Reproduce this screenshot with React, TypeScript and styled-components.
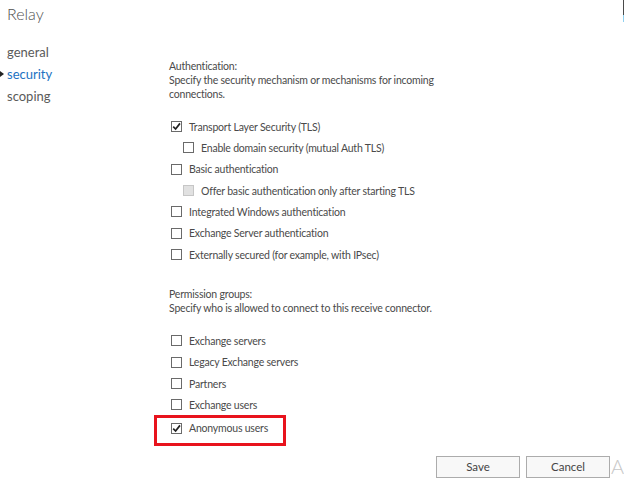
import React from "react";
import styled, { createGlobalStyle } from "styled-components";

const Global = createGlobalStyle`
  html, body { margin: 0; padding: 0; background: #fff; }
  body { font-family: Lato, "Open Sans", sans-serif; color: #444; }
`;

const Page = styled.div`
  position: relative;
  width: 624px;
  height: 480px;
  overflow: hidden;
  background: #fff;
`;

const Title = styled.h1`
  margin: 0;
  padding: 4px 0 0 7px;
  height: 22px;
  font-size: 16px;
  font-weight: 300;
  color: #505050;
  line-height: 20px;
`;

const Body = styled.div`
  display: flex;
`;

const Nav = styled.nav`
  width: 169px;
  padding-top: 15px;
  display: flex;
  flex-direction: column;
`;

const NavItem = styled.div<{ $active?: boolean }>`
  position: relative;
  padding-left: 7px;
  height: 22px;
  line-height: 22px;
  font-size: 13px;
  color: ${(p) => (p.$active ? "#2172c2" : "#5a5a5a")};
`;

const Arrow = styled.span`
  position: absolute;
  left: 0;
  top: 8px;
  width: 0;
  height: 0;
  border-top: 3px solid transparent;
  border-bottom: 3px solid transparent;
  border-left: 4px solid #222;
`;

const Content = styled.div`
  flex: 1;
  padding-top: 33px;
  font-size: 10.5px;
  letter-spacing: -0.2px;
`;

const Para = styled.p`
  margin: 0;
  line-height: 14px;
  color: #4a4a4a;
`;

const List = styled.div<{ $top: number }>`
  margin-top: ${(p) => p.$top}px;
  display: flex;
  flex-direction: column;
`;

const Row = styled.label<{ $indent?: boolean }>`
  display: flex;
  align-items: center;
  height: 21.33px;
  padding-left: ${(p) => (p.$indent ? 14 : 2)}px;
  gap: 7px;
  color: #4a4a4a;
  white-space: nowrap;
`;

const Box = styled.span<{ $disabled?: boolean }>`
  box-sizing: border-box;
  width: 11px;
  height: 11px;
  flex: none;
  border: 1px solid ${(p) => (p.$disabled ? "#c6c6c6" : "#6a6a6a")};
  background: ${(p) => (p.$disabled ? "#e1e1e1" : "#fff")};
  display: flex;
  align-items: center;
  justify-content: center;
`;

const Highlight = styled.div`
  margin-left: -15px;
  margin-top: -1px;
  width: 132px;
  height: 31px;
  box-sizing: border-box;
  border: 3px solid #e8131d;
  padding-left: 12px;
`;

const Footer = styled.div`
  display: flex;
  gap: 6px;
  padding-left: 436px;
  margin-top: 10px;
  align-items: center;
`;

const Button = styled.button`
  box-sizing: border-box;
  width: 84px;
  height: 22px;
  flex: none;
  border: 1px solid #acacac;
  background: #f8f8f8;
  font-family: Lato, "Open Sans", sans-serif;
  font-size: 11.5px;
  color: #444;
  padding: 0;
`;

const Ghost = styled.span`
  flex: none;
  font-size: 20px;
  font-weight: 300;
  color: #c8c8c8;
  margin-left: -5px;
  margin-top: -2px;
`;

const EdgeSliver = styled.div`
  position: absolute;
  right: 0;
  top: 0;
  width: 1px;
  height: 22px;
  background: linear-gradient(#4a4a4a 0 15px, #8fd0ef 15px 22px);
`;

const Check = () => (
  <svg width="9" height="9" viewBox="0 0 9 9">
    <path d="M1.2 4.6 L3.6 7 L8 1.4" fill="none" stroke="#222" strokeWidth="1.7" />
  </svg>
);

type Item = { label: string; checked?: boolean; indent?: boolean; disabled?: boolean };

const CheckRow = ({ label, checked, indent, disabled }: Item) => (
  <Row $indent={indent}>
    <Box $disabled={disabled}>{checked && <Check />}</Box>
    <span>{label}</span>
  </Row>
);

const auth: Item[] = [
  { label: "Transport Layer Security (TLS)", checked: true },
  { label: "Enable domain security (mutual Auth TLS)", indent: true },
  { label: "Basic authentication" },
  { label: "Offer basic authentication only after starting TLS", indent: true, disabled: true },
  { label: "Integrated Windows authentication" },
  { label: "Exchange Server authentication" },
  { label: "Externally secured (for example, with IPsec)" },
];

const perms: Item[] = [
  { label: "Exchange servers" },
  { label: "Legacy Exchange servers" },
  { label: "Partners" },
  { label: "Exchange users" },
];

export default function App() {
  return (
    <Page>
      <Global />
      <Title>Relay</Title>
      <Body>
        <Nav>
          <NavItem>general</NavItem>
          <NavItem $active>
            <Arrow />
            security
          </NavItem>
          <NavItem>scoping</NavItem>
        </Nav>
        <Content>
          <Para>Authentication:</Para>
          <Para>
            Specify the security mechanism or mechanisms for incoming
            <br />
            connections.
          </Para>
          <List $top={15}>
            {auth.map((a) => (
              <CheckRow key={a.label} {...a} />
            ))}
          </List>
          <List $top={22}>
            <Para>Permission groups:</Para>
            <Para>Specify who is allowed to connect to this receive connector.</Para>
          </List>
          <List $top={15}>
            {perms.map((a) => (
              <CheckRow key={a.label} {...a} />
            ))}
            <Highlight>
              <CheckRow label="Anonymous users" checked />
            </Highlight>
          </List>
        </Content>
      </Body>
      <Footer>
        <Button>Save</Button>
        <Button>Cancel</Button>
        <Ghost>A</Ghost>
      </Footer>
      <EdgeSliver />
    </Page>
  );
}
